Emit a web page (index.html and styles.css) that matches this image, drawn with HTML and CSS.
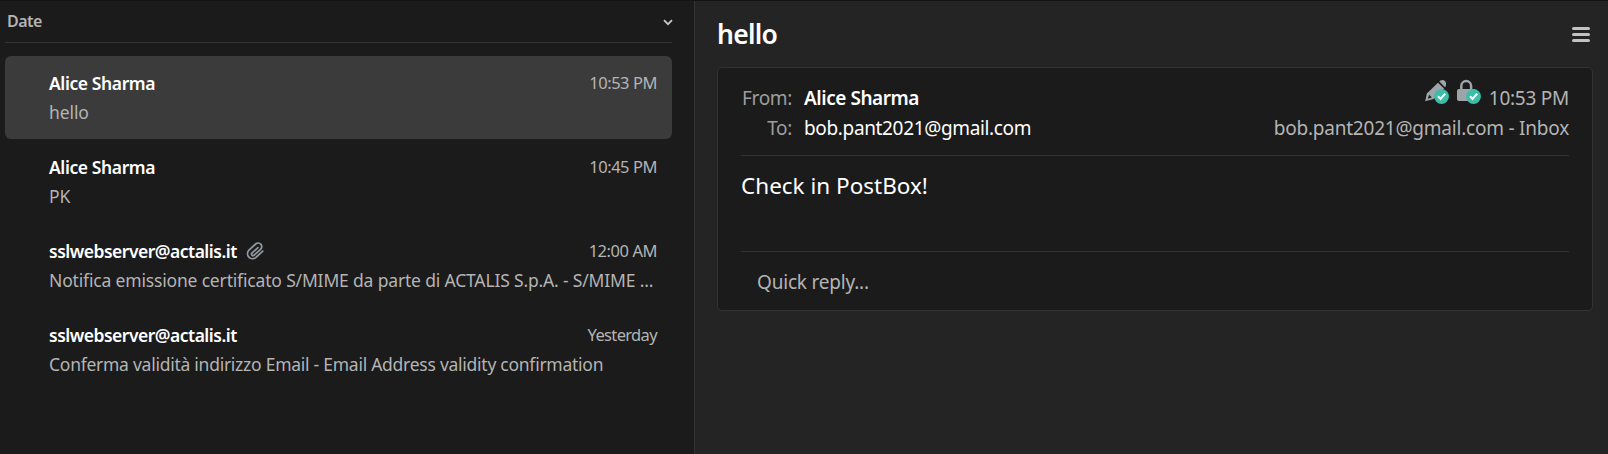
FILE: index.html
```html
<!DOCTYPE html>
<html lang="en">
<head>
<meta charset="utf-8">
<title>Mail</title>
<link rel="stylesheet" href="styles.css">
</head>
<body>
<main class="app">
  <section class="list">
    <header class="sort">
      <span class="sort-label">Date</span>
      <svg class="chevron" viewBox="0 0 10 7"><path d="M1 1.2 5 5.2 9 1.2"/></svg>
    </header>
    <ul class="messages">
      <li class="message selected">
        <div class="line"><span class="sender">Alice Sharma</span><time class="time">10:53 PM</time></div>
        <p class="subject short">hello</p>
      </li>
      <li class="message">
        <div class="line"><span class="sender">Alice Sharma</span><time class="time">10:45 PM</time></div>
        <p class="subject short">PK</p>
      </li>
      <li class="message">
        <div class="line"><span class="sender address">sslwebserver@actalis.it</span>
          <svg class="clip" viewBox="0 0 18 18"><path d="M12 5.600 6 11a1.500 1.500 0 0 0 2.100 2.200l6.500-5.900a3.600 3.600 0 0 0-4.900-5.300L3 8.200a5 5 0 0 0 6.700 7.400l7.100-6.500"/></svg>
          <time class="time">12:00 AM</time></div>
        <p class="subject wide">Notifica emissione certificato S/MIME da parte di ACTALIS S.p.A. - S/MIME ...</p>
      </li>
      <li class="message">
        <div class="line"><span class="sender address">sslwebserver@actalis.it</span><time class="time day">Yesterday</time></div>
        <p class="subject">Conferma validità indirizzo Email - Email Address validity confirmation</p>
      </li>
    </ul>
  </section>
  <section class="reader">
    <header class="reader-head">
      <h1 class="title">hello</h1>
      <svg class="menu" viewBox="0 0 18 15"><path d="M1.5 1.5h15M1.5 7.5h15M1.5 13.5h15"/></svg>
    </header>
    <article class="card">
      <div class="meta">
        <span class="label">From:</span>
        <span class="from">Alice Sharma</span>
        <span class="status">
          <svg class="icons" viewBox="0 0 56 25">
            <g class="glyph">
              <path fill-rule="evenodd" d="M13 3.700 19 9.600 8.500 20 .2 22.200 1.800 14.500ZM4.300 15.800 2.700 19.700 6.800 18.400Z"/>
              <path d="M14.300 2.600 15.500 1.500Q18.200.2 20.200 2.200 22 4.300 20.900 7L20 8.300Z"/>
              <rect x="32" y="10" width="18.500" height="12" rx="2"/>
            </g>
            <path class="shackle" d="M36.300 11V7a4.900 4.900 0 0 1 9.800 0v4"/>
            <circle class="badge" cx="16.500" cy="17.500" r="7.400"/><circle class="badge" cx="48.500" cy="17.500" r="7.400"/>
            <path class="tick" d="M12.900 17.300 15.600 20 20.200 14.700M44.900 17.300 47.600 20 52.200 14.700"/>
          </svg>
          <time class="received">10:53 PM</time>
        </span>
        <span class="label">To:</span>
        <span class="to">bob.pant2021@gmail.com</span>
        <span class="folder">bob.pant2021@gmail.com - Inbox</span>
      </div>
      <p class="body">Check in PostBox!</p>
      <div class="reply">Quick reply...</div>
    </article>
  </section>
</main>
</body>
</html>
```
FILE: styles.css
```css
* { box-sizing: border-box; }
body {
  margin: 0;
  background: #1b1b1b;
  color: #b4b4b4;
  font-family: "Noto Sans", "Open Sans", sans-serif;
}
h1, p, ul { margin: 0; padding: 0; }
ul { list-style: none; }
svg { display: block; fill: none; flex: none; }
.app {
  display: grid;
  grid-template-columns: 695px 1fr;
  height: 454px;
  border-top: 1px solid #131313;
}
.list { border-right: 1px solid #333; padding: 0 22px 0 5px; }
.sort {
  display: flex;
  justify-content: space-between;
  align-items: center;
  height: 42px;
  padding-left: 2px;
  border-bottom: 1px solid #333;
}
.sort-label { padding-bottom: 2px; font-size: 16px; font-weight: 600; line-height: 24px; letter-spacing: -0.5px; }
.chevron { width: 10px; height: 7px; margin: 1px -1px 0 0; stroke: #c8c8c8; stroke-width: 1.8; }
.messages { display: grid; grid-template-columns: minmax(0, 1fr); gap: 1px; padding-top: 13px; }
.message { height: 83px; padding: 13px 15px 0 44px; border-radius: 6px; }
.selected { background: #3b3b3b; }
.line { display: flex; align-items: center; height: 28px; white-space: nowrap; }
.sender { color: #fff; font-size: 17.5px; font-weight: 600; line-height: 28px; letter-spacing: -0.4px; }
.address { letter-spacing: -0.5px; }
.time { margin-left: auto; font-size: 16.5px; line-height: 28px; letter-spacing: -0.45px; }
.day { letter-spacing: -0.65px; }
.clip { width: 18px; height: 18px; margin-left: 9px; stroke: #9297a0; stroke-width: 1.8; stroke-linecap: round; }
.subject { font-size: 17.5px; line-height: 30px; letter-spacing: -0.26px; white-space: nowrap; }
.wide { letter-spacing: -0.17px; }
.short { letter-spacing: -0.1px; }
.reader { background: #242424; padding: 0 15px 0 22px; }
.reader-head { display: flex; justify-content: space-between; align-items: center; height: 66px; padding-right: 3px; }
.title { color: #fff; font-size: 26.5px; font-weight: 600; line-height: 38px; letter-spacing: -0.7px; }
.menu { width: 18px; height: 15px; stroke: #c3c3c3; stroke-width: 3; stroke-linecap: round; }
.card { height: 244px; padding: 0 23px; border: 1px solid #333; border-radius: 5px; background: #1b1b1b; font-size: 19px; letter-spacing: -0.35px; white-space: nowrap; }
.meta {
  display: grid;
  grid-template-columns: 51px auto 1fr;
  grid-template-rows: 30px 30px;
  column-gap: 12px;
  height: 88px;
  padding-top: 15px;
  border-bottom: 1px solid #333;
  line-height: 30px;
}
.label { text-align: right; color: #9e9e9e; }
.from { color: #fff; font-weight: 600; letter-spacing: -0.45px; }
.to { color: #fff; }
.status { display: flex; justify-content: flex-end; gap: 8px; }
.icons { width: 56px; height: 25px; margin-top: -4px; }
.received { letter-spacing: -0.25px; }
.glyph { fill: #9da5a8; }
.shackle { stroke: #9da5a8; stroke-width: 2.5; }
.badge { fill: #3dbda7; }
.tick { stroke: #fff; stroke-width: 2; }
.folder { text-align: right; letter-spacing: -0.22px; }
.body { height: 96px; padding-top: 13px; border-bottom: 1px solid #333; color: #fff; font-size: 22.5px; line-height: 34px; letter-spacing: 0; }
.reply { padding: 15px 16px; line-height: 30px; letter-spacing: -0.2px; }
```
